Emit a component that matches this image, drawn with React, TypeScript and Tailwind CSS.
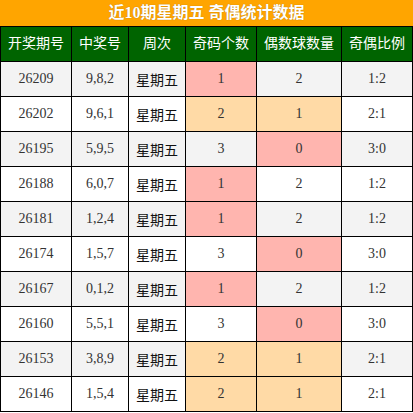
const rows = [
  { id: '26209', nums: '9,8,2', odd: '1', even: '2', ratio: '1:2', oddBg: 'pink', evenBg: '' },
  { id: '26202', nums: '9,6,1', odd: '2', even: '1', ratio: '2:1', oddBg: 'peach', evenBg: 'peach' },
  { id: '26195', nums: '5,9,5', odd: '3', even: '0', ratio: '3:0', oddBg: '', evenBg: 'pink' },
  { id: '26188', nums: '6,0,7', odd: '1', even: '2', ratio: '1:2', oddBg: 'pink', evenBg: '' },
  { id: '26181', nums: '1,2,4', odd: '1', even: '2', ratio: '1:2', oddBg: 'pink', evenBg: '' },
  { id: '26174', nums: '1,5,7', odd: '3', even: '0', ratio: '3:0', oddBg: '', evenBg: 'pink' },
  { id: '26167', nums: '0,1,2', odd: '1', even: '2', ratio: '1:2', oddBg: 'pink', evenBg: '' },
  { id: '26160', nums: '5,5,1', odd: '3', even: '0', ratio: '3:0', oddBg: '', evenBg: 'pink' },
  { id: '26153', nums: '3,8,9', odd: '2', even: '1', ratio: '2:1', oddBg: 'peach', evenBg: 'peach' },
  { id: '26146', nums: '1,5,4', odd: '2', even: '1', ratio: '2:1', oddBg: 'peach', evenBg: 'peach' },
]

const headers = ['开奖期号', '中奖号', '周次', '奇码个数', '偶数球数量', '奇偶比例']

function cellBg(kind: string, striped: boolean) {
  if (kind === 'pink') return 'bg-[#ffb5af]'
  if (kind === 'peach') return 'bg-[#ffdaa6]'
  return striped ? 'bg-[#f3f3f3]' : 'bg-white'
}

function Cell({ children, className }: { children: React.ReactNode; className: string }) {
  return <div className={`flex h-[34px] items-center justify-center leading-none ${className}`}>{children}</div>
}

export default function App() {
  return (
    <div className="w-[413px] bg-black" style={{ fontFamily: '"Liberation Serif", "Noto Sans CJK SC", serif' }}>
      <div className="flex h-[26px] items-center justify-center bg-[#ffa500] text-[16px] font-bold text-white [text-shadow:0_0_1px_rgba(0,0,0,0.35)]">
        近10期星期五 奇偶统计数据
      </div>
      <div className="grid grid-cols-[70px_56px_56px_70px_84px_70px] gap-px p-px">
        {headers.map((h) => (
          <Cell key={h} className="bg-[#006400] text-[14px] text-white">
            {h}
          </Cell>
        ))}
        {rows.map((r, i) => {
          const striped = i % 2 === 0
          const base = cellBg('', striped)
          return [
            <Cell key={r.id + 'a'} className={`${base} text-[14px] text-[#333]`}>{r.id}</Cell>,
            <Cell key={r.id + 'b'} className={`${base} text-[14px] text-[#333]`}>{r.nums}</Cell>,
            <Cell key={r.id + 'c'} className={`${base} pt-[3px] text-[14px] text-[#111]`}>星期五</Cell>,
            <Cell key={r.id + 'd'} className={`${cellBg(r.oddBg, striped)} text-[14px] text-[#333]`}>{r.odd}</Cell>,
            <Cell key={r.id + 'e'} className={`${cellBg(r.evenBg, striped)} text-[14px] text-[#333]`}>{r.even}</Cell>,
            <Cell key={r.id + 'f'} className={`${base} text-[14px] text-[#333]`}>{r.ratio}</Cell>,
          ]
        })}
      </div>
    </div>
  )
}
